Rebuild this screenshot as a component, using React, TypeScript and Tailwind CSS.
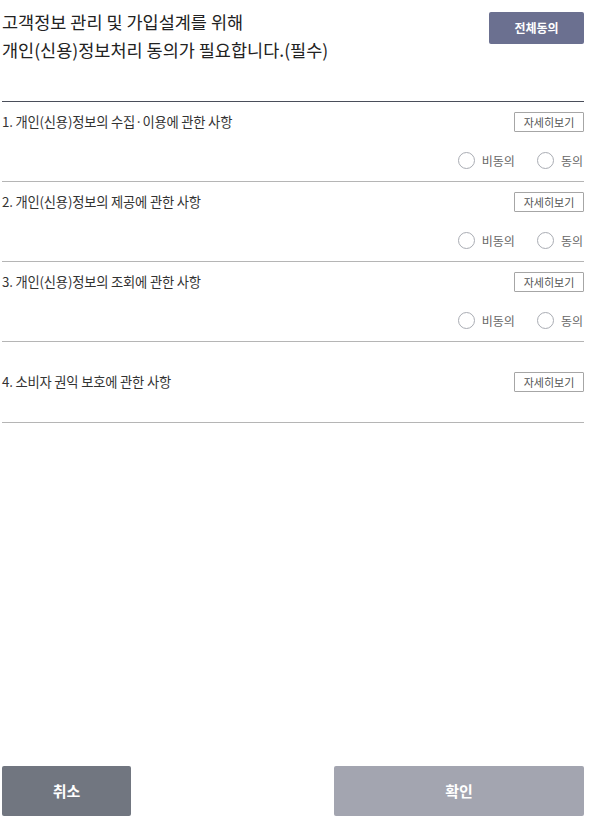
import React from "react";

const font = { fontFamily: '"Noto Sans CJK KR", "Noto Sans", sans-serif' };

function Radio({ label }: { label: string }) {
  return (
    <label className="flex items-center gap-[7px]">
      <span className="w-[17px] h-[17px] rounded-full border border-[#a9acb3] bg-white" />
      <span className="text-[12px] leading-[17px] text-[#666]">{label}</span>
    </label>
  );
}

function DetailButton() {
  return (
    <button className="h-[20px] w-[70px] border border-[#a6a6a6] rounded-[1px] bg-white text-[11px] leading-none text-[#555]">
      자세히보기
    </button>
  );
}

function Row({ title, radios }: { title: string; radios: boolean }) {
  if (!radios) {
    return (
      <div className="border-b border-[#b5b5b5] pt-[30px] pb-[30px]">
        <div className="flex items-center justify-between h-[20px]">
          <span className="text-[13.3px] tracking-[-0.2px] text-[#333]">{title}</span>
          <DetailButton />
        </div>
      </div>
    );
  }
  return (
    <div className="border-b border-[#b5b5b5] pt-[10px] pb-[12px]">
      <div className="flex items-center justify-between h-[20px]">
        <span className="text-[13.3px] tracking-[-0.2px] text-[#333]">{title}</span>
        <DetailButton />
      </div>
      <div className="flex justify-end gap-[22px] mt-[20px] h-[17px] pr-[1px]">
        <Radio label="비동의" />
        <Radio label="동의" />
      </div>
    </div>
  );
}

export default function App() {
  return (
    <div className="h-[824px] bg-white flex flex-col pl-[2px] pr-[10px]" style={font}>
      <div className="h-[101px] flex justify-between items-start">
        <h1 className="pt-[8px] text-[17.5px] leading-[28px] text-[#222] font-normal">
          고객정보 관리 및 가입설계를 위해
          <br />
          개인(신용)정보처리 동의가 필요합니다.(필수)
        </h1>
        <button className="mt-[12px] w-[95px] h-[32px] rounded-[2px] bg-[#6b7090] text-white text-[12px] font-bold">
          전체동의
        </button>
      </div>
      <div className="h-px bg-[#4a4e5a]" />
      <Row title="1. 개인(신용)정보의 수집·이용에 관한 사항" radios />
      <Row title="2. 개인(신용)정보의 제공에 관한 사항" radios />
      <Row title="3. 개인(신용)정보의 조회에 관한 사항" radios />
      <Row title="4. 소비자 권익 보호에 관한 사항" radios={false} />
      <div className="flex-1" />
      <div className="flex justify-between mb-[8px]">
        <button className="w-[129px] h-[50px] rounded-[2px] bg-[#717680] text-white text-[15px] font-bold">
          취소
        </button>
        <button className="w-[250px] h-[50px] rounded-[2px] bg-[#a3a5b0] text-white text-[15px] font-bold">
          확인
        </button>
      </div>
    </div>
  );
}
